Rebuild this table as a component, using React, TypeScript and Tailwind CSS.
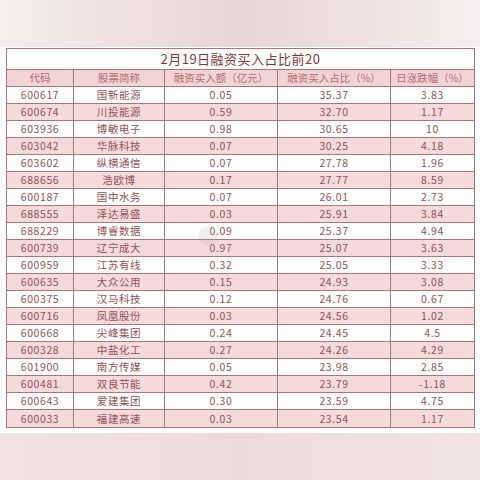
import React from "react";

const rows: [string, string, string, string, string][] = [
  ["600617", "国新能源", "0.05", "35.37", "3.83"],
  ["600674", "川投能源", "0.59", "32.70", "1.17"],
  ["603936", "博敏电子", "0.98", "30.65", "10"],
  ["603042", "华脉科技", "0.07", "30.25", "4.18"],
  ["603602", "纵横通信", "0.07", "27.78", "1.96"],
  ["688656", "浩欧博", "0.17", "27.77", "8.59"],
  ["600187", "国中水务", "0.07", "26.01", "2.73"],
  ["688555", "泽达易盛", "0.03", "25.91", "3.84"],
  ["688229", "博睿数据", "0.09", "25.37", "4.94"],
  ["600739", "辽宁成大", "0.97", "25.07", "3.63"],
  ["600959", "江苏有线", "0.32", "25.05", "3.33"],
  ["600635", "大众公用", "0.15", "24.93", "3.08"],
  ["600375", "汉马科技", "0.12", "24.76", "0.67"],
  ["600716", "凤凰股份", "0.03", "24.56", "1.02"],
  ["600668", "尖峰集团", "0.24", "24.45", "4.5"],
  ["600328", "中盐化工", "0.27", "24.26", "4.29"],
  ["601900", "南方传媒", "0.05", "23.98", "2.85"],
  ["600481", "双良节能", "0.42", "23.79", "-1.18"],
  ["600643", "爱建集团", "0.30", "23.59", "4.75"],
  ["600033", "福建高速", "0.03", "23.54", "1.17"],
];

const headers = ["代码", "股票简称", "融资买入额（亿元）", "融资买入占比（%）", "日涨跌幅（%）"];

const font = { fontFamily: '"Noto Sans CJK SC", "Noto Sans", sans-serif' };

export default function App() {
  return (
    <div className="w-[480px] h-[480px] flex flex-col bg-[#f1e1e1] overflow-hidden" style={font}>
      <div className="h-[47px] shrink-0 bg-gradient-to-r from-[#f6eded] via-[#e9d5d5] to-[#f6eeee]" />
      <div className="bg-white pt-[1px] pb-[5px] pl-[6px] pr-[5px] relative">
        <div className="border border-[#a8767a] w-[469px]">
          <div className="h-[21px] border-b border-[#a8767a] flex items-center justify-center text-[13px] text-[#7a3a3c] tracking-[0.5px]">
            2月19日融资买入占比前20
          </div>
          <div className="grid grid-cols-[67px_91px_113px_113px_83px]">
            {headers.map((h, i) => (
              <div
                key={h}
                className={`h-[17px] flex items-center justify-center bg-[#f1d5d6] text-[10.5px] text-[#b8686c] border-b border-[#a8767a] ${i < 4 ? "border-r" : ""}`}
              >
                {h}
              </div>
            ))}
            {rows.map((r, ri) =>
              r.map((c, ci) => (
                <div
                  key={ri + "-" + ci}
                  className={`h-[17px] flex items-center justify-center text-[10.5px] text-[#935256] tracking-[0.6px] border-[#a8767a] ${ri < rows.length - 1 ? "border-b" : ""} ${ci < 4 ? "border-r" : ""} ${ri % 2 === 1 ? "bg-[#f4dadb]" : "bg-white"}`}
                >
                  {c}
                </div>
              ))
            )}
          </div>
        </div>
        <div className="absolute left-[198px] top-[179px] w-[20px] h-[20px] rounded-full bg-[#9a9a9a] opacity-15 pointer-events-none" />
      </div>
      <div className="flex-1 bg-gradient-to-r from-[#f3e3e3] via-[#eedada] to-[#f3e5e5]" />
    </div>
  );
}
